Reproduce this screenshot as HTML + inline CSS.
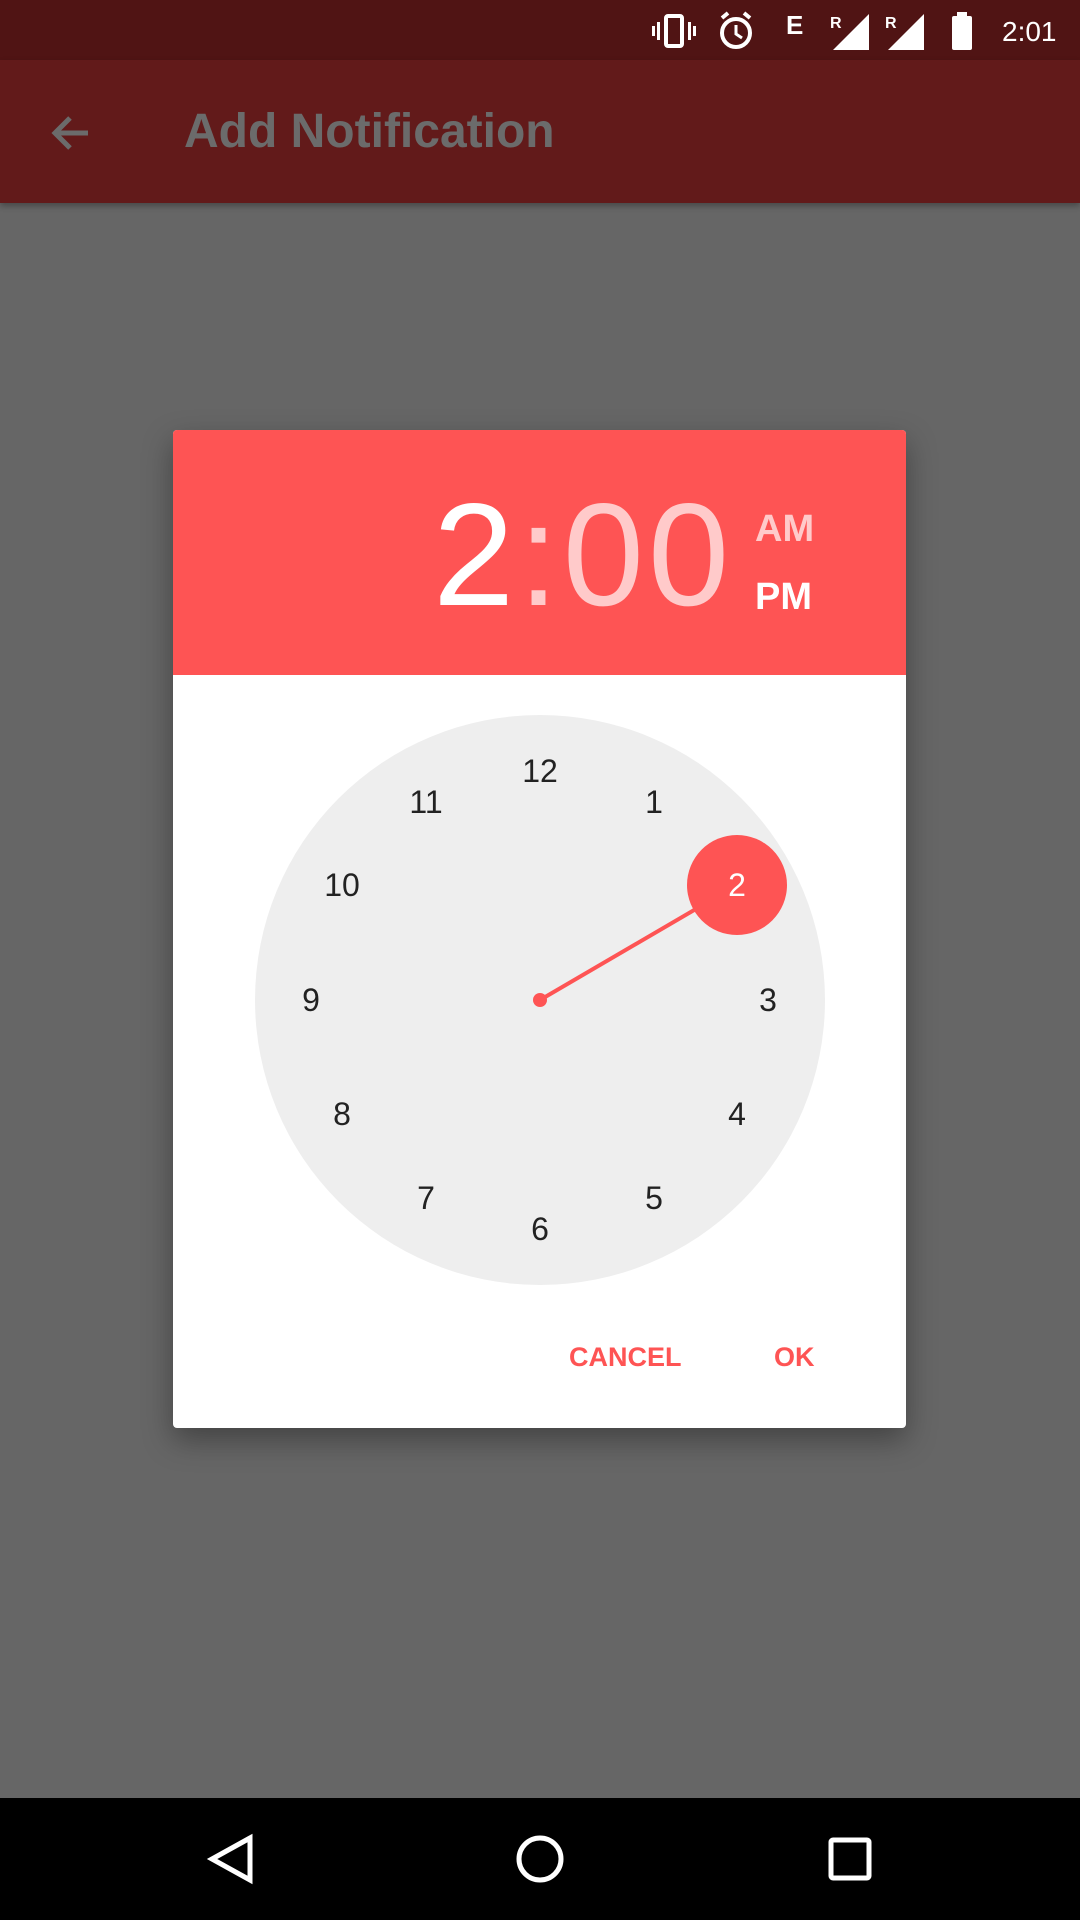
<!DOCTYPE html>
<html><head><meta charset="utf-8"><style>
*{margin:0;padding:0;box-sizing:border-box}
body{width:1080px;height:1920px;background:#666;position:relative;overflow:hidden;font-family:"Liberation Sans",Roboto,sans-serif}
.abs{position:absolute}
.num{position:absolute;width:60px;height:40px;margin:-20px 0 0 -30px;text-align:center;font-size:32px;line-height:40px;color:#222}
</style></head><body>
<div class="abs" style="left:0;top:0;width:1080px;height:60px;background:#501414"></div>
<div class="abs" style="left:0;top:60px;width:1080px;height:143px;background:#621a1a;box-shadow:0 3px 6px rgba(0,0,0,.3)"></div>
<svg class="abs" style="left:650px;top:8px" width="430" height="46" viewBox="0 0 430 46">
<g fill="#fff">
<rect x="16" y="8" width="16" height="30" rx="2" fill="none" stroke="#fff" stroke-width="4"/>
<rect x="7" y="14" width="3" height="18"/><rect x="38" y="14" width="3" height="18"/>
<rect x="2" y="18" width="3" height="10"/><rect x="43" y="18" width="3" height="10"/>
<circle cx="86" cy="25" r="14" fill="none" stroke="#fff" stroke-width="4"/>
<path d="M86 17v9l6 4" stroke="#fff" stroke-width="3" fill="none"/>
<path d="M72 10l6-5M100 10l-6-5" stroke="#fff" stroke-width="4"/>
<text x="136" y="26" font-size="26" font-weight="bold" font-family="Liberation Sans">E</text>
<text x="180" y="20" font-size="16" font-weight="bold" font-family="Liberation Sans">R</text>
<path d="M183 42L219 6V42Z"/>
<text x="235" y="20" font-size="16" font-weight="bold" font-family="Liberation Sans">R</text>
<path d="M238 42L274 6V42Z"/>
<rect x="302" y="8" width="20" height="34" rx="2"/><rect x="307" y="4" width="10" height="5"/>
<text x="352" y="33" font-size="28" font-family="Liberation Sans">2:01</text>
</g></svg>
<svg class="abs" style="left:48px;top:110px" width="46" height="46" viewBox="0 0 46 46"><path d="M40 23H8M22 8L7 23l15 15" stroke="#6b6b6b" stroke-width="5" fill="none"/></svg>
<div class="abs" style="left:184px;top:104px;font-size:48px;color:#6b6b6b;font-weight:bold">Add Notification</div>
<div class="abs" style="left:173px;top:430px;width:733px;height:998px;background:#fff;border-radius:4px;box-shadow:0 12px 30px rgba(0,0,0,.35);overflow:hidden">
<div style="height:245px;background:#fe5454;position:relative">
<div class="abs" style="left:260px;top:50px;font-size:146px;line-height:150px;color:#fff;letter-spacing:4px">2<span style="color:#ffcaca">:00</span></div>
<div class="abs" style="left:582px;top:78px;font-size:38px;font-weight:bold;color:#ffcaca">AM</div>
<div class="abs" style="left:582px;top:146px;font-size:38px;font-weight:bold;color:#fff">PM</div>
</div>
<div class="abs" style="left:82px;top:285px;width:570px;height:570px;border-radius:50%;background:#eee"></div>
<svg class="abs" style="left:0;top:0" width="733" height="998"><line x1="367" y1="570" x2="564" y2="455" stroke="#fe5454" stroke-width="4"/><circle cx="367" cy="570" r="7" fill="#fe5454"/><circle cx="564" cy="455" r="50" fill="#fe5454"/></svg>
<div class="num" style="left:367px;top:341px">12</div>
<div class="num" style="left:481px;top:372px">1</div>
<div class="num" style="left:564px;top:455px;color:#fff">2</div>
<div class="num" style="left:595px;top:570px">3</div>
<div class="num" style="left:564px;top:684px">4</div>
<div class="num" style="left:481px;top:768px">5</div>
<div class="num" style="left:367px;top:799px">6</div>
<div class="num" style="left:253px;top:768px">7</div>
<div class="num" style="left:169px;top:684px">8</div>
<div class="num" style="left:138px;top:570px">9</div>
<div class="num" style="left:169px;top:455px">10</div>
<div class="num" style="left:253px;top:372px">11</div>
<div class="abs" style="left:396px;top:912px;font-size:27px;font-weight:bold;color:#fe5454">CANCEL</div>
<div class="abs" style="left:601px;top:912px;font-size:27px;font-weight:bold;color:#fe5454">OK</div>
</div>
<div class="abs" style="left:0;top:1798px;width:1080px;height:122px;background:#000"></div>
<svg class="abs" style="left:0;top:1798px" width="1080" height="122"><g fill="none" stroke="#fff" stroke-width="5"><path d="M250 40L212 61L250 82Z"/><circle cx="540" cy="61" r="21"/><rect x="831" y="42" width="38" height="38" rx="2"/></g></svg>
</body></html>
